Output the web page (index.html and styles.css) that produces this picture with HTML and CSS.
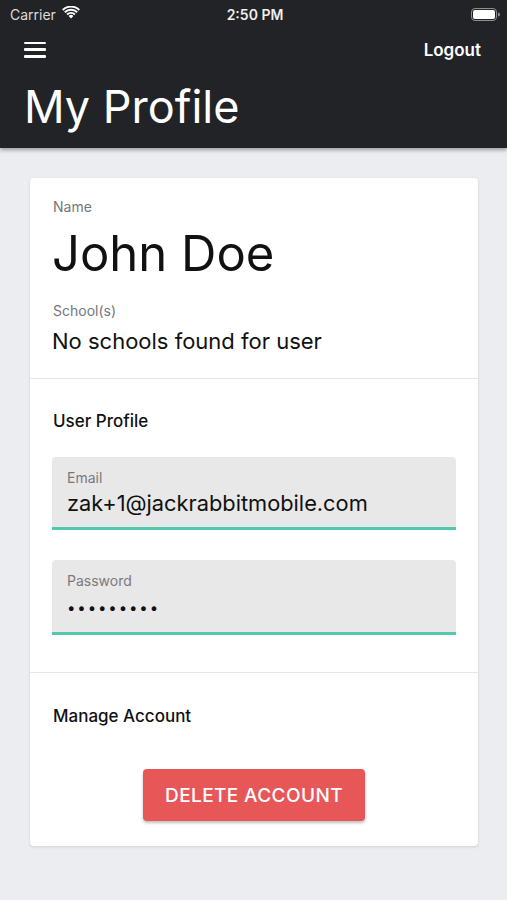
FILE: index.html
```html
<!DOCTYPE html>
<html lang="en">
<head>
  <meta charset="UTF-8">
  <title>My Profile</title>
  <link rel="stylesheet" href="styles.css">
</head>
<body>

  <!-- header -->
  <header class="app-header">
    <div class="status-bar">
      <div class="status-left">
        <span class="carrier">Carrier</span>
        <svg class="wifi" width="18" height="13" viewBox="0 0 18 13">
          <path d="M9 12.5 L6.6 10 A3.4 3.4 0 0 1 11.4 10 Z" fill="#fff"/>
          <path d="M4.4 7.8 A6.5 6.5 0 0 1 13.6 7.8 L12.2 9.2 A4.5 4.5 0 0 0 5.8 9.2 Z" fill="#fff"/>
          <path d="M2.1 5.5 A9.8 9.8 0 0 1 15.9 5.5 L14.5 6.9 A7.8 7.8 0 0 0 3.5 6.9 Z" fill="#fff"/>
          <path d="M0 3.3 A12.8 12.8 0 0 1 18 3.3 L16.6 4.7 A10.8 10.8 0 0 0 1.4 4.7 Z" fill="#fff"/>
        </svg>
      </div>
      <div class="clock">2:50 PM</div>
      <div class="status-right">
        <svg class="battery" width="29" height="13" viewBox="0 0 29 13">
          <rect x="0.5" y="0.5" width="25" height="12" rx="3.5" fill="none" stroke="#8e8f91"/>
          <rect x="2" y="2" width="22" height="9" rx="2" fill="#fff"/>
          <path d="M27 4.5 A2 2 0 0 1 27 8.5 Z" fill="#8e8f91"/>
        </svg>
      </div>
    </div>

    <div class="nav-row">
      <button class="menu-btn" aria-label="Menu">
        <span></span><span></span><span></span>
      </button>
      <a href="#" class="logout">Logout</a>
    </div>

    <h1 class="page-title">My Profile</h1>
  </header>

  <!-- profile card -->
  <main class="card">
    <section class="card-section info">
      <div class="field-label">Name</div>
      <div class="user-name">John Doe</div>
      <div class="field-label">School(s)</div>
      <div class="schools">No schools found for user</div>
    </section>

    <section class="card-section profile">
      <h2 class="section-title">User Profile</h2>
      <div class="text-field">
        <label class="text-field-label">Email</label>
        <div class="text-field-value">zak+1@jackrabbitmobile.com</div>
      </div>
      <div class="text-field password">
        <label class="text-field-label">Password</label>
        <div class="text-field-value dots">•••••••••</div>
      </div>
    </section>

    <section class="card-section manage">
      <h2 class="section-title">Manage Account</h2>
      <div class="button-row">
        <button class="delete-btn">DELETE ACCOUNT</button>
      </div>
    </section>
  </main>

</body>
</html>
```

FILE: styles.css
```css
/* 全体 */
body {
  margin: 0;
  font-family: Inter, "Noto Sans", sans-serif;
  background-color: #ebedf0;
  color: #111;
  height: 900px;
  overflow: hidden;
}

/* ヘッダー */
.app-header {
  background-color: #212326;
  color: #ffffff;
  padding: 0 24px 14px;
  box-shadow: 0 2px 4px rgba(0, 0, 0, 0.35);
}

.status-bar {
  height: 28px;
  display: flex;
  align-items: center;
  justify-content: space-between;
  margin: 0 -17px 0 -14px;
  font-size: 14px;
}

.status-left {
  display: flex;
  align-items: center;
  gap: 6px;
  width: 120px;
}

.carrier {
  color: #dcdcdc;
}

.wifi {
  margin-top: -3px;
}

.clock {
  font-weight: 600;
  color: #eeeeee;
}

.status-right {
  width: 120px;
  display: flex;
  justify-content: flex-end;
}

.nav-row {
  height: 44px;
  display: flex;
  align-items: center;
  justify-content: space-between;
}

.menu-btn {
  background: none;
  border: none;
  padding: 0;
  width: 22px;
  height: 16px;
  display: flex;
  flex-direction: column;
  justify-content: space-between;
  margin-top: -1px;
}

.menu-btn span {
  display: block;
  height: 2.5px;
  background-color: #ffffff;
  border-radius: 1px;
}

.logout {
  color: #ffffff;
  text-decoration: none;
  font-size: 17px;
  font-weight: 600;
  margin-right: 2px;
}

.page-title {
  margin: 8px 0 0;
  font-size: 45px;
  font-weight: 400;
  line-height: 54px;
}

/* カード */
.card {
  background-color: #ffffff;
  margin: 30px 29px 0 30px;
  border-radius: 4px;
  box-shadow: 0 1px 3px rgba(0, 0, 0, 0.12);
}

.card-section {
  padding: 0 22px;
  border-bottom: 1px solid #e6e7e9;
}

.card-section:last-child {
  border-bottom: none;
}

.info {
  padding-top: 21px;
  padding-bottom: 24px;
}

.field-label {
  font-size: 14px;
  line-height: 16px;
  color: #74777b;
  margin-left: 1px;
}

.user-name {
  font-size: 49px;
  line-height: 56px;
  margin-top: 11px;
  margin-bottom: 21px;
}

.schools {
  font-size: 22px;
  line-height: 26px;
  margin-top: 9px;
}

.section-title {
  margin: 0;
  font-size: 17px;
  font-weight: 500;
  line-height: 20px;
  margin-left: 1px;
}

.profile {
  padding-top: 32px;
  padding-bottom: 37px;
}

/* 入力欄 */
.text-field {
  background-color: #e8e8e8;
  border-radius: 4px 4px 0 0;
  border-bottom: 3px solid #52c8ad;
  padding: 13px 15px 11px;
  margin-top: 26px;
}

.text-field.password {
  margin-top: 30px;
}

.text-field-label {
  display: block;
  font-size: 14px;
  line-height: 16px;
  color: #7a7a7a;
}

.text-field-value {
  font-size: 21.8px;
  line-height: 25px;
  margin-top: 5px;
  color: #111;
}

.dots {
  font-size: 15px;
  letter-spacing: 1.9px;
  line-height: 27px;
}

.manage {
  padding-top: 33px;
  padding-bottom: 25px;
}

.button-row {
  display: flex;
  justify-content: center;
  margin-top: 43px;
}

.delete-btn {
  width: 222px;
  height: 52px;
  border: none;
  border-radius: 4px;
  background-color: #e85757;
  color: #ffffff;
  font-family: Inter, sans-serif;
  font-size: 19px;
  font-weight: 500;
  letter-spacing: 0.4px;
  box-shadow: 0 2px 3px rgba(0, 0, 0, 0.25);
}
```
